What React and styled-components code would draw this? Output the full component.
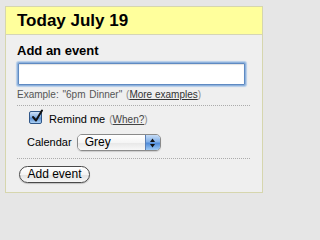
import React from "react";
import styled, { createGlobalStyle } from "styled-components";

const Global = createGlobalStyle`
  html, body { margin: 0; padding: 0; background: #e6e6e6; }
  body { font-family: "Liberation Sans", Arial, sans-serif; color: #000; }
  * { box-sizing: border-box; }
`;

const Panel = styled.div`
  margin: 6px 0 0 5px;
  width: 258px;
  height: 187px;
  border: 1px solid #d6d6ae;
  background: #efefef;
`;

const Header = styled.div`
  height: 28px;
  background: #ffff9c;
  border-bottom: 1px solid #d5d5b6;
  padding: 4px 0 0 11px;
`;

const Title = styled.h1`
  margin: 0;
  font-size: 17px;
  font-weight: bold;
  line-height: 20px;
`;

const Body = styled.div`
  padding: 8px 0 0 11px;
`;

const SectionTitle = styled.h2`
  margin: 0;
  font-size: 13px;
  font-weight: bold;
  line-height: 16px;
`;

const TextInput = styled.input`
  display: block;
  margin: 4px 0 0 1px;
  width: 227px;
  height: 22px;
  padding: 0 3px;
  border: 1px solid #5f8ac2;
  border-radius: 1px;
  background: #fff;
  box-shadow: 0 0 0 1px #8fb2dc, 0 0 1px 2px #b4cde9, inset 0 1px 1px rgba(0, 0, 0, 0.12);
  outline: none;
`;

const Hint = styled.div`
  margin-top: 3px;
  font-size: 10px;
  color: #555;
  line-height: 13px;
  white-space: nowrap;
  word-spacing: 1px;
`;

const HintLink = styled.a`
  color: #333;
  text-decoration: underline;
  word-spacing: 0;
`;

const Paren = styled.span`
  color: #8a8a8a;
`;

const Divider = styled.div`
  margin-top: ${p => p.$top}px;
  border-top: 1px dotted #ababab;
  width: 233px;
`;

const Row = styled.div`
  display: flex;
  align-items: ${p => p.$align};
  margin-top: ${p => p.$top}px;
  padding-left: ${p => p.$indent}px;
  gap: ${p => p.$gap}px;
  font-size: 11px;
  line-height: ${p => p.$lh}px;
`;

const Check = styled.span`
  width: 13px;
  height: 13px;
  border: 1px solid #2f5688;
  border-radius: 2px;
  background: linear-gradient(#cfe1f6 0%, #86b0e2 45%, #5a8fd4 55%, #aad0f4 100%);
  position: relative;
  display: inline-block;
  flex: none;
`;

const CheckMark = styled.svg`
  position: absolute;
  left: 1px;
  top: -3px;
`;

const Small = styled.span`
  font-size: 10px;
  color: #8a8a8a;
  margin-left: 4px;
`;

const SmallLink = styled.a`
  color: #444;
  text-decoration: underline;
`;

const Select = styled.div`
  width: 84px;
  height: 17px;
  display: flex;
  border: 1px solid #8a8a8a;
  border-radius: 5px;
  overflow: hidden;
  box-shadow: 0 1px 1px rgba(0, 0, 0, 0.15);
`;

const SelectLabel = styled.div`
  flex: 1;
  background: linear-gradient(#ffffff 0%, #f5f5f5 50%, #e8e8e8 55%, #f8f8f8 100%);
  font-size: 12px;
  line-height: 15px;
  padding-left: 7px;
`;

const SelectArrows = styled.div`
  width: 15px;
  border-left: 1px solid #5a7fb5;
  background: linear-gradient(#c6dcf6 0%, #82b0e9 45%, #4f8bd9 55%, #9ecaf5 100%);
  display: flex;
  align-items: center;
  justify-content: center;
`;

const Button = styled.button`
  display: block;
  margin: 7px 0 0 2px;
  width: 71px;
  height: 17px;
  padding: 0;
  border: 1px solid #4a4a4a;
  border-radius: 9px;
  background: linear-gradient(#ffffff 0%, #f4f4f4 50%, #e3e3e3 55%, #f6f6f6 100%);
  font-family: "Liberation Sans", Arial, sans-serif;
  font-size: 12px;
  line-height: 15px;
  color: #000;
  box-shadow: 0 1px 1px rgba(0, 0, 0, 0.2);
`;

export default function App() {
  return (
    <>
      <Global />
      <Panel>
        <Header>
          <Title>Today July 19</Title>
        </Header>
        <Body>
          <SectionTitle>Add an event</SectionTitle>
          <TextInput type="text" />
          <Hint>
            Example: "6pm Dinner" <Paren>(</Paren>
            <HintLink>More examples</HintLink>
            <Paren>)</Paren>
          </Hint>
          <Divider $top={4} />
          <Row $top={5} $indent={12} $gap={7} $align="flex-start" $lh={16}>
            <Check>
              <CheckMark width="13" height="14" viewBox="0 0 13 14">
                <path
                  d="M2 8 L5 11.5 L11 1.5"
                  fill="none"
                  stroke="#111"
                  strokeWidth="2"
                  strokeLinecap="round"
                  strokeLinejoin="round"
                />
              </CheckMark>
            </Check>
            <span>
              Remind me
              <Small>
                (<SmallLink>When?</SmallLink>)
              </Small>
            </span>
          </Row>
          <Row $top={6} $indent={10} $gap={5} $align="center" $lh={17}>
            <span>Calendar</span>
            <Select>
              <SelectLabel>Grey</SelectLabel>
              <SelectArrows>
                <svg width="5" height="10" viewBox="0 0 5 10">
                  <path d="M2.5 0.5 L5 4 L0 4 Z" fill="#111" />
                  <path d="M2.5 9.5 L5 6 L0 6 Z" fill="#111" />
                </svg>
              </SelectArrows>
            </Select>
          </Row>
          <Divider $top={7} />
          <Button>Add event</Button>
        </Body>
      </Panel>
    </>
  );
}
